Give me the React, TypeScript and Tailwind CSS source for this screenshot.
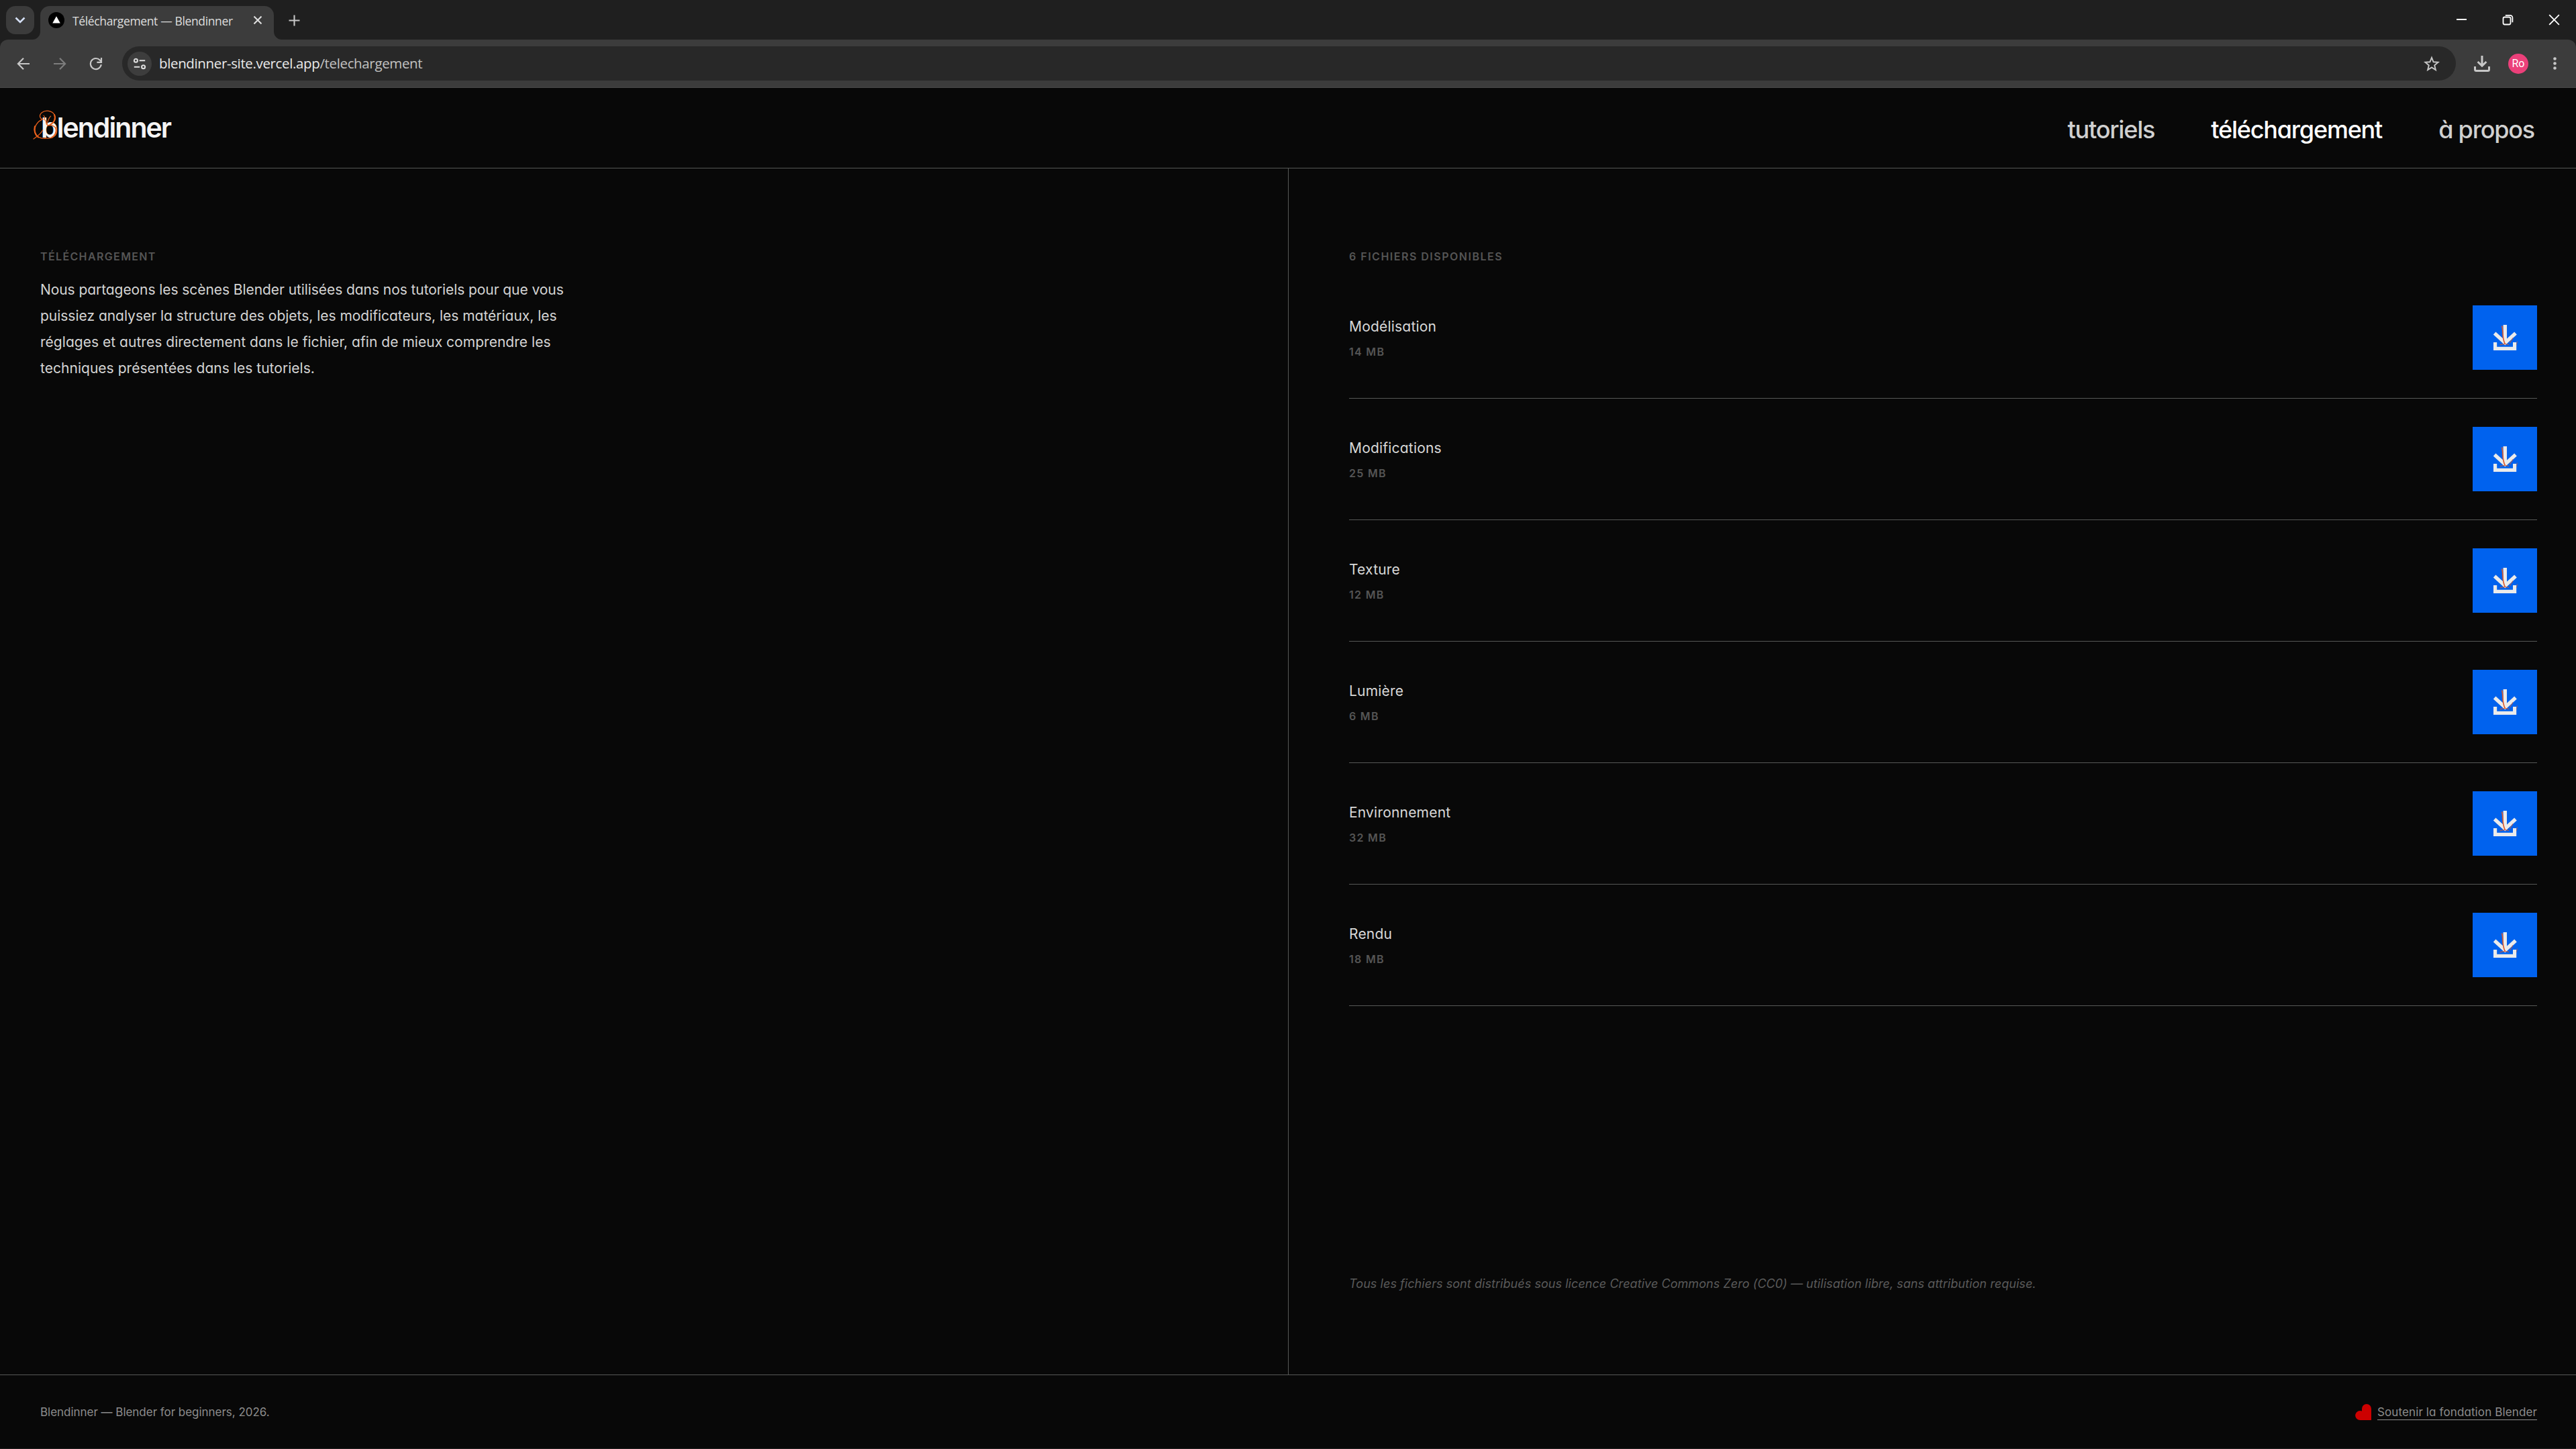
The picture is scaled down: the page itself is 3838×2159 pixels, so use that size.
import React from 'react';

interface FileEntry {
  name: string;
  size: string;
}

const FILES: FileEntry[] = [
  { name: 'Modélisation', size: '14 MB' },
  { name: 'Modifications', size: '25 MB' },
  { name: 'Texture', size: '12 MB' },
  { name: 'Lumière', size: '6 MB' },
  { name: 'Environnement', size: '32 MB' },
  { name: 'Rendu', size: '18 MB' },
];

const TabStrip = () => (
  <div className="flex h-[59px] bg-[#1f1f1f] pl-[9px] pt-[9px]">
    <button className="flex h-[42px] w-[42px] items-center justify-center rounded-[14px] bg-[#3b3b3b]">
      <svg width="16" height="10" viewBox="0 0 16 10" fill="none" stroke="#d5e0f7" strokeWidth="2.6">
        <path d="M1.5 1.5 8 8l6.5-6.5" />
      </svg>
    </button>

    <div className="relative ml-[9px] flex h-[50px] w-[348px] items-start rounded-t-[14px] bg-[#3c3c3c] pl-3 pt-[9px]">
      {/* Flared feet of the active tab */}
      <svg className="absolute -left-3 bottom-0" width="12" height="12" viewBox="0 0 12 12">
        <path d="M12 0v12H0A12 12 0 0 0 12 0Z" fill="#3c3c3c" />
      </svg>
      <svg className="absolute -right-3 bottom-0" width="12" height="12" viewBox="0 0 12 12">
        <path d="M0 0v12h12A12 12 0 0 1 0 0Z" fill="#3c3c3c" />
      </svg>
      <svg width="24" height="24" viewBox="0 0 24 24">
        <circle cx="12" cy="12" r="12" fill="#000" />
        <path d="M12 6.2 17.8 16.6H6.2Z" fill="#fff" />
      </svg>
      <span className="ml-3 whitespace-nowrap font-['Open_Sans',sans-serif] text-[17.5px] leading-[27px] tracking-[-0.36px] text-[#dedede]">
        Téléchargement — Blendinner
      </span>
      <svg className="ml-auto mr-[17px] mt-[5px]" width="14" height="14" viewBox="0 0 14 14" stroke="#dedede" strokeWidth="2.1">
        <path d="M1.5 1.5l11 11M12.5 1.5l-11 11" />
      </svg>
    </div>

    <svg className="ml-[22px] mt-[13px]" width="17" height="17" viewBox="0 0 17 17" stroke="#c7c7c7" strokeWidth="2.1">
      <path d="M8.5 0.5v16M0.5 8.5h16" />
    </svg>

    <div className="ml-auto mr-[24px] mt-[12px] flex gap-[52px]">
      <svg width="17" height="17" viewBox="0 0 17 17" stroke="#fff" strokeWidth="2">
        <path d="M1 8h15" />
      </svg>
      <svg width="17" height="17" viewBox="0 0 17 17" fill="none" stroke="#fff" strokeWidth="1.8">
        <rect x="1.5" y="4.5" width="11" height="11" rx="2.2" />
        <path d="M4.8 1.9h7a3.6 3.6 0 0 1 3.6 3.6v6.8" />
      </svg>
      <svg width="17" height="17" viewBox="0 0 17 17" stroke="#fff" strokeWidth="1.9">
        <path d="M1.2 1.2l14.6 14.6M15.8 1.2 1.2 15.8" />
      </svg>
    </div>
  </div>
);

const Toolbar = () => (
  <div className="bg-[#1f1f1f]">
    <div className="flex h-[72px] items-center rounded-t-[12px] border-b border-[#484848] bg-[#3c3c3c] pl-[25px]">
      <svg width="20" height="20" viewBox="0 0 20 20" fill="none" stroke="#c7c7c7" strokeWidth="2.2">
        <path d="M19 10H2.2M10 1.8 1.9 10l8.1 8.2" />
      </svg>
      <svg className="ml-[34px]" width="20" height="20" viewBox="0 0 20 20" fill="none" stroke="#7d7d7d" strokeWidth="2.2">
        <path d="M1 10h16.8M10 1.8l8.1 8.2-8.1 8.2" />
      </svg>
      <svg className="ml-[34px]" width="20" height="20" viewBox="0 0 20 20" fill="none" stroke="#c7c7c7" strokeWidth="2.2">
        <path d="M17.8 11.2A8 8 0 1 1 15.8 4.6L18 6.9" />
        <path d="M18 1v6.8h-6.6" />
      </svg>

      <div className="ml-[29px] flex h-[51px] w-[3477px] items-center rounded-full bg-[#282828] pl-2 pr-[24px]">
        <div className="flex h-9 w-9 items-center justify-center rounded-full bg-[#3d3d3d]">
          <svg width="20" height="18" viewBox="0 0 20 18" fill="none" stroke="#dedede" strokeWidth="2.1">
            <circle cx="4.4" cy="4.2" r="2.5" />
            <path d="M9.6 4.2h8.6M1.8 13.8h8.4" />
            <circle cx="15.6" cy="13.8" r="2.5" />
          </svg>
        </div>
        <span className="mb-0.5 ml-[11px] whitespace-nowrap font-['Open_Sans',sans-serif] text-[20.5px] leading-[30px] tracking-[-0.36px] text-[#c2c2c2]">
          <span className="text-[#eaeaea]">blendinner-site.vercel.app</span>/telechargement
        </span>
        <svg className="ml-auto" width="24" height="24" viewBox="0 0 24 24" fill="none" stroke="#c7c7c7" strokeWidth="1.9">
          <path d="M12 2.8l2.6 6.5 7 .5-5.4 4.5 1.7 6.8-5.9-3.7-5.9 3.7 1.7-6.8-5.4-4.5 7-.5Z" />
        </svg>
      </div>

      <svg className="ml-[27px]" width="24" height="24" viewBox="0 0 24 24" fill="none" stroke="#c7c7c7" strokeWidth="3">
        <path d="M12 0v14.5M5.6 9l6.4 6.2L18.4 9" />
        <path d="M1.5 16v4.5a2 2 0 0 0 2 2h17a2 2 0 0 0 2-2V16" />
      </svg>
      <div className="ml-[27px] flex h-[30px] w-[30px] items-center justify-center rounded-full bg-[#ec407a] font-[Roboto,sans-serif] text-[16px] leading-none text-white">
        Ro
      </div>
      <svg className="ml-[37px]" width="5" height="19" viewBox="0 0 5 19" fill="#c7c7c7">
        <circle cx="2.5" cy="2.5" r="2.3" />
        <circle cx="2.5" cy="9.5" r="2.3" />
        <circle cx="2.5" cy="16.5" r="2.3" />
      </svg>
    </div>
  </div>
);

const Logo = () => (
  <div className="relative mb-px text-[41px] font-semibold leading-[44px] tracking-[-1.95px] text-[#f4f4f4]">
    blendinner
    {/* Calligraphic B wrapped around the first letter */}
    <svg className="absolute -left-[14px] -top-[7px]" width="54" height="50" viewBox="0 0 162 150" fill="none" stroke="#e8601c" strokeLinecap="round">
      <path d="M52 50C36 48 32 32 46 20C62 8 92 10 102 30C112 52 98 72 72 78" strokeWidth="3.8" />
      <path d="M102 30C110 48 100 66 84 74" strokeWidth="6" />
      <path d="M50 50C26 60 10 82 15 108C20 128 40 138 62 136" strokeWidth="4" />
      <path d="M15 82C10 100 16 120 30 130" strokeWidth="6.5" />
      <path d="M72 78C98 72 114 88 110 108C106 128 84 140 60 134" strokeWidth="3.8" />
      <path d="M109 88C114 108 104 126 90 132" strokeWidth="6" />
      <path d="M9 138C22 128 42 116 50 98" strokeWidth="3.6" />
      <path d="M86 36C76 44 72 60 68 74M54 34C64 40 54 48 60 54C68 56 60 66 72 76" strokeWidth="3.4" />
    </svg>
  </div>
);

const SiteHeader = () => (
  <header className="flex h-[120px] items-center justify-between border-b border-[#565856] pl-[61px] pr-[62px]">
    <Logo />
    <nav className="flex gap-[84px] pt-1 text-[36px] font-medium leading-[44px] tracking-[-1.2px] text-[#d0d0d0]">
      <a>tutoriels</a>
      <a className="text-white">téléchargement</a>
      <a>à propos</a>
    </nav>
  </header>
);

const DownloadIcon = () => (
  <svg className="-mt-0.5" width="48" height="48" viewBox="0 0 48 48" fill="none">
    <path d="M24.3 6v26M8.6 18.4l15.7 14.4L40 18.4" stroke="#ebebeb" strokeWidth="5.4" />
    <path d="M9.6 32v9.4h29V32" stroke="#ebebeb" strokeWidth="5.2" />
    <path d="M19.6 7.5c2.6 8-.4 18 4.8 27" stroke="#dd5a2a" strokeWidth="1.6" />
    <path d="M16.5 36c4-1.6 8.5-1.8 13.5-.6M31.5 33c.5-3 3.6-4 4-7.5" stroke="#dd5a2a" strokeWidth="1" />
    <path d="M42.2 30.5c.4 2.4-.8 3.4-.8 5.5" stroke="#a8605a" strokeWidth=".9" />
  </svg>
);

const FileRow: React.FC<{ file: FileEntry }> = ({ file }) => (
  <li className="flex h-[181px] items-center justify-between border-b border-[#565856]">
    <div>
      <p className="text-[21px] leading-[37px] tracking-[0.2px] text-[#d8d8d8]">{file.name}</p>
      <p className="mt-[5px] text-[16px] font-semibold leading-7 tracking-[1.3px] text-[#555555]">{file.size}</p>
    </div>
    <button className="flex h-24 w-24 items-center justify-center bg-[#0062ee]">
      <DownloadIcon />
    </button>
  </li>
);

const SiteFooter = () => (
  <footer className="flex h-[111px] items-center justify-between border-y border-b-[#1e1e1e] border-t-[#565856] pl-[60px] pr-[58px] text-[17px] text-[#8c8c8c]">
    <p className="pt-0.5 tracking-[-0.03px]">Blendinner — Blender for beginners, 2026.</p>
    <a className="flex items-center gap-[9px]">
      <svg width="24" height="24" viewBox="0 0 24 24" fill="#cc0000">
        <path d="M24 24H7a7 7 0 1 1 3-13.4V7a7 7 0 1 1 14 0Z" />
      </svg>
      <span className="border-b border-[#8c8c8c] pt-px leading-[22px] tracking-[0.12px]">Soutenir la fondation Blender</span>
    </a>
  </footer>
);

export default function App() {
  return (
    <div className="flex h-[2159px] w-[3838px] flex-col overflow-hidden bg-[#080808] font-[Inter,sans-serif] [font-feature-settings:'cv11']">
      <TabStrip />
      <Toolbar />
      <SiteHeader />

      <main className="flex flex-1">
        <section className="w-[1920px] border-r border-[#565856] pl-[60px] pt-[119px]">
          <h1 className="text-[16px] font-semibold leading-6 tracking-[1.37px] text-[#555555]">TÉLÉCHARGEMENT</h1>
          <p className="mt-[18px] text-[21px] leading-[39px] tracking-[0.03px] text-[#d4d4d4]">
            <span className="tracking-[-0.07px]">Nous partageons les scènes Blender utilisées dans nos tutoriels pour que vous</span>
            <br />
            <span className="tracking-[-0.02px]">puissiez analyser la structure des objets, les modificateurs, les matériaux, les</span>
            <br />
            réglages et autres directement dans le fichier, afin de mieux comprendre les
            <br />
            techniques présentées dans les tutoriels.
          </p>
        </section>

        <section className="flex flex-1 flex-col pb-[121px] pl-[90px] pr-[58px] pt-[119px]">
          <h2 className="text-[16px] font-semibold leading-6 tracking-[1.5px] text-[#555555]">6 FICHIERS DISPONIBLES</h2>
          <ul className="mt-[19px]">
            {FILES.map((file) => (
              <FileRow key={file.name} file={file} />
            ))}
          </ul>
          <p className="mt-auto text-[18px] italic leading-7 tracking-[0.06px] text-[#5a5a5a]">
            Tous les fichiers sont distribués sous licence Creative Commons Zero (CC0) — utilisation libre, sans attribution requise.
          </p>
        </section>
      </main>

      <SiteFooter />
    </div>
  );
}
